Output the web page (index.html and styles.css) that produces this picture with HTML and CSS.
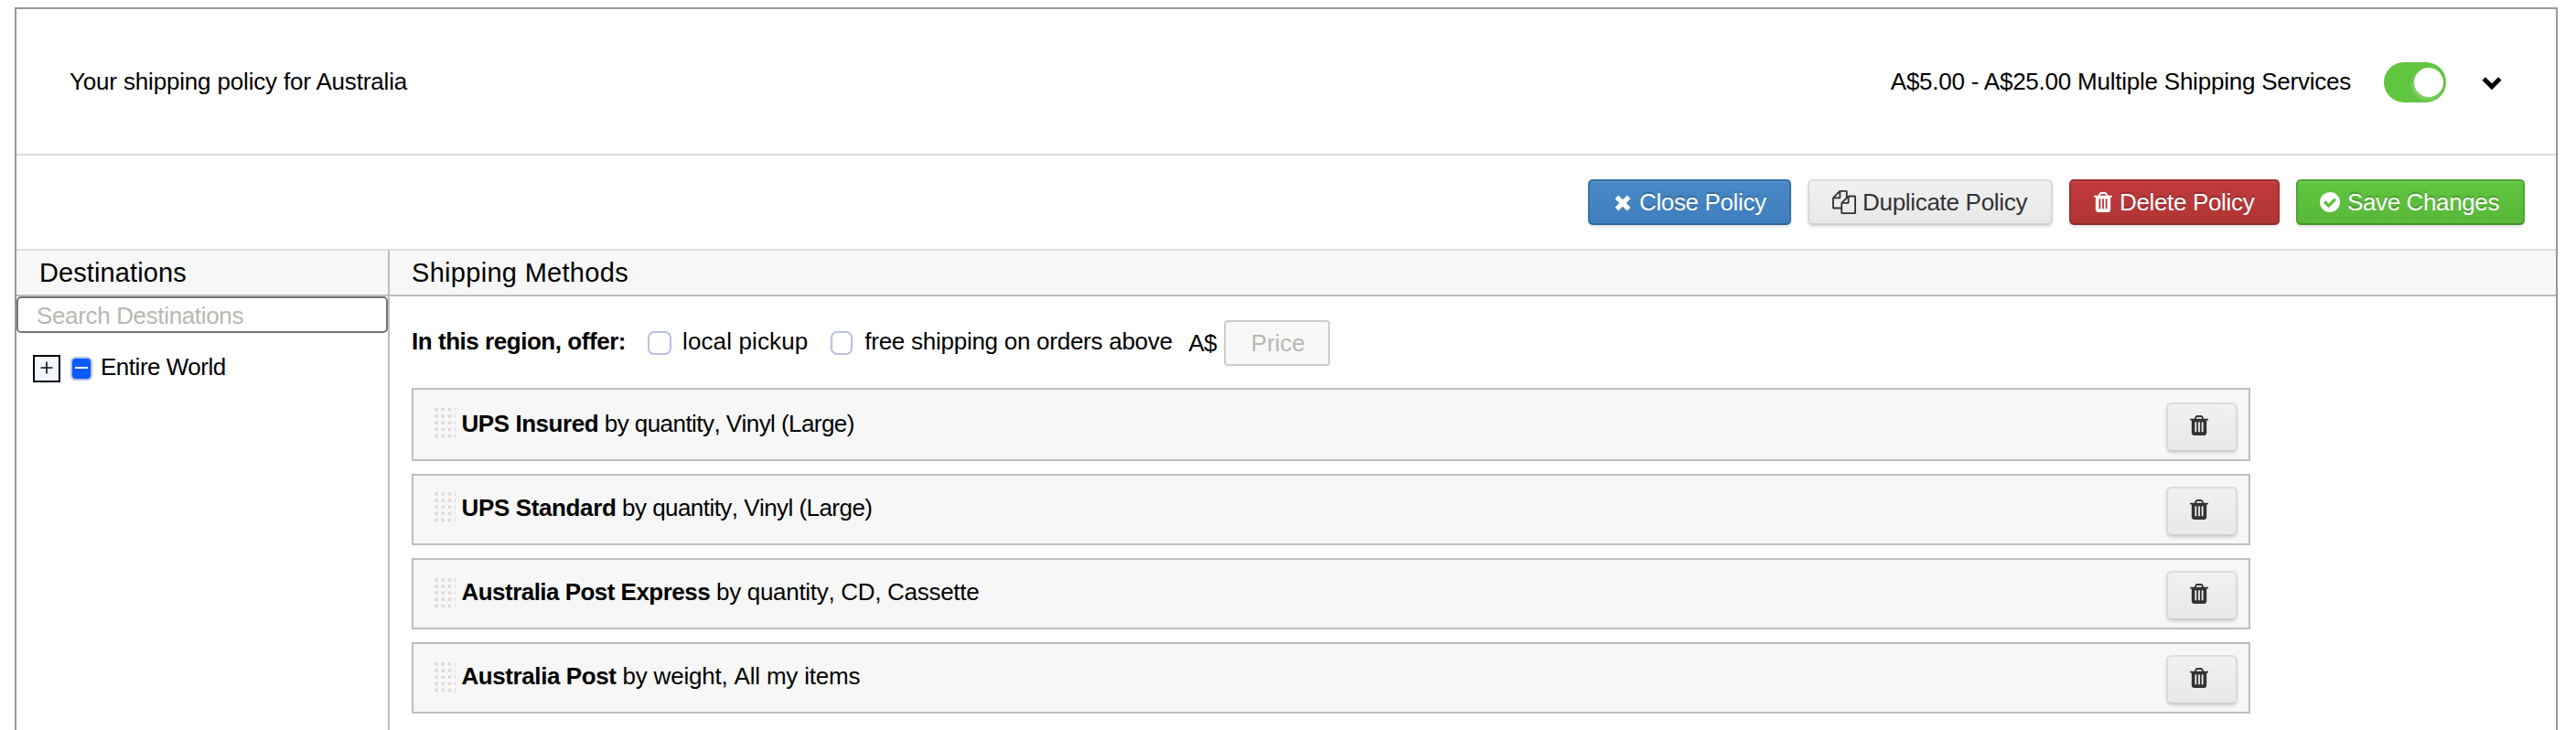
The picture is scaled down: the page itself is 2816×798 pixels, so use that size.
FILE: index.html
```html
<!DOCTYPE html>
<html lang="en">
<head>
<meta charset="utf-8">
<title>Shipping policy</title>
<link rel="stylesheet" href="styles.css">
</head>
<body>
<svg class="defs" width="0" height="0" aria-hidden="true">
  <symbol id="trash" viewBox="0 0 1408 1536"><path fill-rule="evenodd" d="M512 1248V544q0-14-9-23t-23-9h-64q-14 0-23 9t-9 23v704q0 14 9 23t23 9h64q14 0 23-9t9-23zm256 0V544q0-14-9-23t-23-9h-64q-14 0-23 9t-9 23v704q0 14 9 23t23 9h64q14 0 23-9t9-23zm256 0V544q0-14-9-23t-23-9h-64q-14 0-23 9t-9 23v704q0 14 9 23t23 9h64q14 0 23-9t9-23zM480 256h448l-48-117q-7-9-17-11H546q-10 2-17 11zm928 32v64q0 14-9 23t-23 9h-96v948q0 83-47 143.500t-113 60.500H288q-66 0-113-58.500T128 1336V384H32q-14 0-23-9t-9-23v-64q0-14 9-23t23-9h309l70-167q15-37 54-63t79-26h320q40 0 79 26t54 63l70 167h309q14 0 23 9t9 23z"/></symbol>
  <symbol id="files" viewBox="0 0 1792 1792"><path d="M1696 384q40 0 68 28t28 68v1216q0 40-28 68t-68 28H736q-40 0-68-28t-28-68v-288H96q-40 0-68-28t-28-68V640q0-40 20-88t48-76L476 68q28-28 76-48t88-20h416q40 0 68 28t28 68v328q68-40 128-40zm-544 213L853 896h299zM512 213L213 512h299zm196 647l316-316V128H640v416q0 40-28 68t-68 28H128v640h512v-256q0-40 20-88t48-76zm956 804V512h-384v416q0 40-28 68t-68 28H768v640z"/></symbol>
</svg>
<main class="policy">
  <header class="summary">
    <div class="title">Your shipping policy for Australia</div>
    <div class="range">A$5.00 - A$25.00 Multiple Shipping Services</div>
    <div class="toggle"><span class="knob"></span></div>
    <svg class="chevron" viewBox="0 0 24 16"><path d="M3.200 3L12 11.700 20.800 3" fill="none" stroke="#000" stroke-width="5"/></svg>
  </header>
  <div class="actions">
    <button class="btn blue"><svg class="i-x" viewBox="0 0 18 18"><path d="M4.200 4.200L13.800 13.800M13.800 4.200L4.200 13.800" stroke="currentColor" stroke-width="5.200" stroke-linecap="square"/></svg><span class="t-close">Close Policy</span></button>
    <button class="btn grey"><svg class="i-files"><use href="#files"/></svg><span class="t-dup">Duplicate Policy</span></button>
    <button class="btn red"><svg class="i-trash"><use href="#trash"/></svg><span class="t-del">Delete Policy</span></button>
    <button class="btn green"><svg class="i-check" viewBox="0 0 22 22"><circle cx="11" cy="11" r="11" fill="#fff"/><path d="M5.200 10.500L9.600 14.900 16.800 7.700" fill="none" stroke="#5cbd3a" stroke-width="3.200"/></svg><span class="t-save">Save Changes</span></button>
  </div>
  <div class="columns">
    <section class="destinations">
      <h2><span class="t-dest">Destinations</span></h2>
      <div class="search"><span class="t-search">Search Destinations</span></div>
      <div class="tree">
        <span class="expand"><svg viewBox="0 0 14 14"><path d="M7 .5v13M.5 7h13" stroke="#111" stroke-width="1.600"/></svg></span>
        <span class="partial"></span>
        <span class="t-world">Entire World</span>
      </div>
    </section>
    <section class="methods">
      <h2><span class="t-methods">Shipping Methods</span></h2>
      <div class="offer">
        <b class="t-offer">In this region, offer:</b>
        <span class="check one"></span><span class="t-local">local pickup</span>
        <span class="check two"></span><span class="t-free">free shipping on orders above</span>
        <span class="t-cur">A$</span>
        <span class="price">Price</span>
      </div>
      <ul class="list">
        <li class="method first"><span class="grip"></span><p class="m1"><b>UPS Insured</b> by quantity, Vinyl (Large)</p><button class="btn grey bin"><svg class="i-trash"><use href="#trash"/></svg></button></li>
        <li class="method second"><span class="grip"></span><p class="m2"><b>UPS Standard</b> by quantity, Vinyl (Large)</p><button class="btn grey bin"><svg class="i-trash"><use href="#trash"/></svg></button></li>
        <li class="method"><span class="grip"></span><p class="m3"><b>Australia Post Express</b> by quantity, CD, Cassette</p><button class="btn grey bin"><svg class="i-trash"><use href="#trash"/></svg></button></li>
        <li class="method"><span class="grip"></span><p class="m4"><b>Australia Post</b> by weight, All my items</p><button class="btn grey bin"><svg class="i-trash"><use href="#trash"/></svg></button></li>
      </ul>
    </section>
  </div>
</main>
</body>
</html>
```
FILE: styles.css
```css
* { box-sizing: border-box; }
body {
  height: 798px;
  margin: 0;
  padding: 8px 20px 0 16px;
  background: #fff;
  color: #000;
  font: 26px/30px "Liberation Sans", Arial, sans-serif;
  white-space: nowrap;
}
svg { display: block; flex: none; }
.defs { position: absolute; }
.policy {
  height: 790px;
  border: 2px solid #999;
  border-bottom: 0;
  display: flex;
  flex-direction: column;
}
.summary {
  height: 160px;
  border-bottom: 2px solid #ddd;
  display: flex;
  align-items: center;
  padding: 0 58px;
}
.title { flex: 1; letter-spacing: -.17px; }
.range { letter-spacing: -.23px; }
.toggle {
  width: 68px;
  height: 44px;
  margin-left: 36px;
  margin-top: 2px;
  padding: 6px 3px;
  border-radius: 22px;
  background: #60c53f;
  display: flex;
  justify-content: flex-end;
}
.knob {
  width: 32px;
  height: 32px;
  border-radius: 50%;
  background: #fff;
  box-shadow: -2px 3px 4px rgba(255, 255, 255, .25);
}
.chevron { width: 24px; height: 16px; margin-left: 38px; margin-top: 4px; }
.actions {
  height: 104px;
  border-bottom: 2px solid #ddd;
  padding: 26px 34px 0 0;
  display: flex;
  justify-content: flex-end;
  gap: 18px;
}
.btn {
  height: 50px;
  margin: 0;
  padding: 0 0 0 24px;
  border: 2px solid;
  border-radius: 5px;
  font: inherit;
  color: #fff;
  display: flex;
  align-items: center;
  box-shadow: inset 0 2px 0 rgba(255, 255, 255, .06), 0 2px 3px rgba(0, 0, 0, .12);
}
.blue { width: 222px; padding-left: 27px; border-color: #3572a8 #3572a8 #2f6596; background: linear-gradient(#4788c6, #3f7fbe); text-shadow: 0 -2px 1px rgba(0, 0, 0, .2); }
.grey { width: 268px; padding-left: 25px; border-color: #dedede #d9d9d9 #cfcfcf; background: linear-gradient(#f1f1f1, #e8e8e8); color: #333; }
.red { width: 230px; padding-left: 25px; border-color: #a03031 #a03031 #8f2a2b; background: linear-gradient(#c13a3b, #b13536); text-shadow: 0 -2px 1px rgba(0, 0, 0, .2); }
.green { width: 250px; border-color: #50a434 #50a434 #48942e; background: linear-gradient(#61c640, #58b838); text-shadow: 0 -2px 1px rgba(0, 0, 0, .2); }
.t-close { letter-spacing: -.36px; }
.t-dup { letter-spacing: -.3px; }
.t-del { letter-spacing: -.34px; }
.t-save { letter-spacing: -.38px; }
.i-x { width: 18px; height: 18px; margin: 2px 9px 0 0; }
.i-files { width: 26px; height: 26px; margin-right: 7px; fill: #333; }
.i-trash { width: 20px; height: 22px; margin-right: 8px; fill: currentColor; }
.i-check { width: 22px; height: 22px; margin-right: 8px; }
.columns { flex: 1; display: flex; }
.destinations { width: 408px; border-right: 2px solid #bfbfba; }
.methods { flex: 1; }
h2 {
  height: 50px;
  margin: 0;
  border-bottom: 2px solid #bfbfba;
  background: #f7f7f7;
  font-size: 29px;
  font-weight: normal;
  line-height: 48px;
  padding-left: 24px;
}
.destinations h2 { padding-left: 25px; }
.t-dest { letter-spacing: .1px; }
.t-methods { letter-spacing: .3px; }
.search {
  height: 40px;
  border: 2px solid #767676;
  border-radius: 5px;
  padding: 2px 0 0 20px;
  line-height: 34px;
  color: #b8b8b0;
}
.t-search { letter-spacing: -.35px; }
.tree { display: flex; align-items: flex-start; padding: 24px 0 0 18px; }
.expand { width: 30px; height: 30px; border: 2px solid #000; background: #f0f7ff; display: flex; align-items: center; justify-content: center; }
.expand svg { width: 14px; height: 14px; margin-top: -2px; }
.partial { width: 24px; height: 26px; margin: 2px 9px 0 11px; border: 2px solid #b5bce6; border-radius: 6px; background: linear-gradient(#fff, #fff) center 9px / 14px 2px no-repeat #0b5cff; }
.t-world { letter-spacing: -.48px; margin-top: -2px; }
.offer { height: 100px; padding: 0 0 0 24px; display: flex; align-items: flex-start; }
.offer > * { margin-top: 34px; }
.offer > .check { width: 26px; height: 26px; margin-top: 38px; border: 2px solid #b9bfe6; border-radius: 7px; }
.offer > .one { margin-left: 24px; margin-right: 12px; }
.offer > .two { width: 24px; margin-left: 25px; margin-right: 13px; }
.t-offer { letter-spacing: -.46px; }
.t-local { letter-spacing: .12px; }
.t-free { letter-spacing: -.26px; }
.offer > .t-cur { margin-top: 36px; margin-left: 17.500px; letter-spacing: -.5px; }
.offer > .price { width: 116px; height: 50px; margin: 26px 0 0 7.500px; border: 2px solid #ccc; border-radius: 4px; background: #f7f7f7; color: #b8b8b0; line-height: 46px; padding-left: 28px; }
.list { list-style: none; margin: 0; padding: 0 0 0 24px; display: flex; flex-direction: column; gap: 14px; }
.method { width: 2010px; height: 78px; border: 2px solid #bfbfba; background: #f7f7f7; display: flex; align-items: flex-start; padding: 0 12px 0 21px; }
.first { height: 80px; padding-top: 2px; }
.method p { flex: 1; margin: 20px 0 0 6.500px; font-kerning: none; }
.m1 { letter-spacing: -.56px; }
.m1 b { letter-spacing: -.45px; }
.m2 { letter-spacing: -.55px; }
.m2 b { letter-spacing: -.37px; }
.m3 { letter-spacing: -.3px; }
.m3 b { letter-spacing: -.53px; }
.m4 { letter-spacing: -.2px; }
.m4 b { letter-spacing: -.42px; }
.grip {
  width: 25px;
  height: 36px;
  margin-top: 20px;
  background: linear-gradient(90deg, transparent 4px, #f7f7f7 4px) 2.300px 0 / 7.200px 7.200px, linear-gradient(#dcdcdc 4px, #f7f7f7 4px) 0 0 / 7.200px 7.200px;
}
.first .grip, .second .grip { margin-top: 18px; }
.bin { width: 78px; height: 54px; margin-top: 12px; padding: 0 0 0 24px; align-items: flex-start; border-radius: 6px; }
.bin .i-trash { margin-top: 12px; }
```
